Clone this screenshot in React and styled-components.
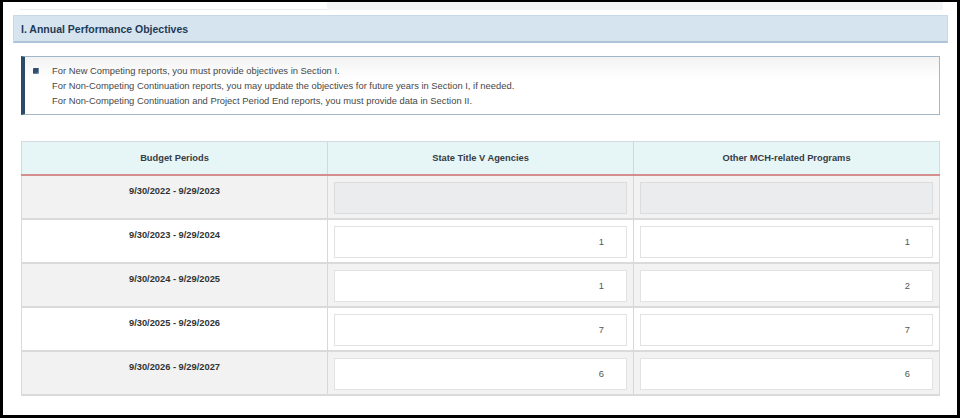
import React from 'react';
import styled, { createGlobalStyle } from 'styled-components';

const GlobalStyle = createGlobalStyle`
  html, body {
    margin: 0;
    padding: 0;
    background: #ffffff;
  }
  * {
    box-sizing: border-box;
  }
`;

const periods = [
  { label: '9/30/2022 - 9/29/2023', state: '', other: '', locked: true },
  { label: '9/30/2023 - 9/29/2024', state: '1', other: '1' },
  { label: '9/30/2024 - 9/29/2025', state: '1', other: '2' },
  { label: '9/30/2025 - 9/29/2026', state: '7', other: '7' },
  { label: '9/30/2026 - 9/29/2027', state: '6', other: '6' },
];

const notes = [
  'For New Competing reports, you must provide objectives in Section I.',
  'For Non-Competing Continuation reports, you may update the objectives for future years in Section I, if needed.',
  'For Non-Competing Continuation and Project Period End reports, you must provide data in Section II.',
];

function App() {
  return (
    <Frame>
      <GlobalStyle />
      <TopStrip>
        <StripLeft />
        <StripRight />
      </TopStrip>
      <SectionBar>I. Annual Performance Objectives</SectionBar>
      <InfoBox>
        <Bullet />
        <Notes>
          {notes.map((n) => (
            <div key={n}>{n}</div>
          ))}
        </Notes>
      </InfoBox>
      <Table>
        <thead>
          <tr>
            <Th>Budget Periods</Th>
            <Th>State Title V Agencies</Th>
            <Th>Other MCH-related Programs</Th>
          </tr>
        </thead>
        <tbody>
          {periods.map((p, i) => (
            <Row key={p.label} $shaded={i % 2 === 0}>
              <PeriodCell>{p.label}</PeriodCell>
              <InputCell>
                <NumInput $locked={p.locked} readOnly value={p.state} />
              </InputCell>
              <InputCell>
                <NumInput $locked={p.locked} readOnly value={p.other} />
              </InputCell>
            </Row>
          ))}
        </tbody>
      </Table>
    </Frame>
  );
}

export default App;

const Frame = styled.div`
  width: 960px;
  height: 418px;
  border: 3px solid #000;
  border-top-width: 2px;
  padding: 0 9px 0 10px;
  font-family: 'Liberation Sans', Arial, sans-serif;
  overflow: hidden;
  background: #fff;
`;

const TopStrip = styled.div`
  display: flex;
  height: 8px;
  margin: 0 5px 0 7px;
`;

const StripLeft = styled.div`
  width: 307px;
  border-bottom: 1px solid #ececec;
`;

const StripRight = styled.div`
  flex: 1;
  background: #f3f4f6;
`;

const SectionBar = styled.div`
  margin-top: 5px;
  height: 28px;
  display: flex;
  align-items: center;
  padding: 0 7px;
  background: #d6e4f0;
  border: 1px solid #c9d9e7;
  border-bottom: 2px solid #aec3d6;
  color: #1e3a56;
  font-size: 10.5px;
  font-weight: 700;
`;

const InfoBox = styled.div`
  margin: 13px 8px 0 8px;
  display: flex;
  align-items: flex-start;
  padding: 6px 12px 6px 8px;
  border: 1px solid #a3b6c6;
  border-left: 4px solid #2b4b69;
  background: linear-gradient(to bottom, #f3f3f3 0px, #f6f6f6 6px, #ffffff 22px);
`;

const Bullet = styled.span`
  flex: none;
  width: 6px;
  height: 6px;
  margin-top: 5px;
  margin-right: 13px;
  background: #2f4f6e;
  border-radius: 1px 1px 2px 1px;
  box-shadow: inset -1px -1px 0 #6c86a0;
`;

const Notes = styled.div`
  color: #474747;
  font-size: 9.4px;
  line-height: 15px;
`;

const Table = styled.table`
  margin: 26px 8px 0 8px;
  width: 919px;
  table-layout: fixed;
  border-collapse: collapse;
  border: 1px solid #d3dae0;
`;

const Th = styled.th`
  height: 33px;
  padding: 0;
  background: #e6f5f5;
  border-left: 1px solid #cddae3;
  border-bottom: 2px solid #d58e8e;
  color: #363c45;
  font-size: 9.3px;
  font-weight: 700;
  text-align: center;
  vertical-align: middle;
`;

const Row = styled.tr`
  background: ${(p) => (p.$shaded ? '#f2f2f2' : '#ffffff')};
  border-bottom: 2px solid #dadada;
`;

const PeriodCell = styled.td`
  padding: 9px 6px 0 6px;
  vertical-align: top;
  text-align: center;
  color: #333;
  font-size: 9.3px;
  font-weight: 700;
  line-height: 12px;
`;

const InputCell = styled.td`
  padding: 6px 6px 4px 6px;
  border-left: 1px solid #cddae3;
  vertical-align: top;
`;

const NumInput = styled.input`
  display: block;
  width: 100%;
  height: 32px;
  margin: 0;
  padding: 0 22px 0 8px;
  border: 1px solid ${(p) => (p.$locked ? '#dadcdd' : '#e2e2e2')};
  background: ${(p) => (p.$locked ? '#ebeced' : '#ffffff')};
  color: #555;
  font-family: 'Liberation Sans', Arial, sans-serif;
  font-size: 9.3px;
  text-align: right;
  outline: none;
`;
